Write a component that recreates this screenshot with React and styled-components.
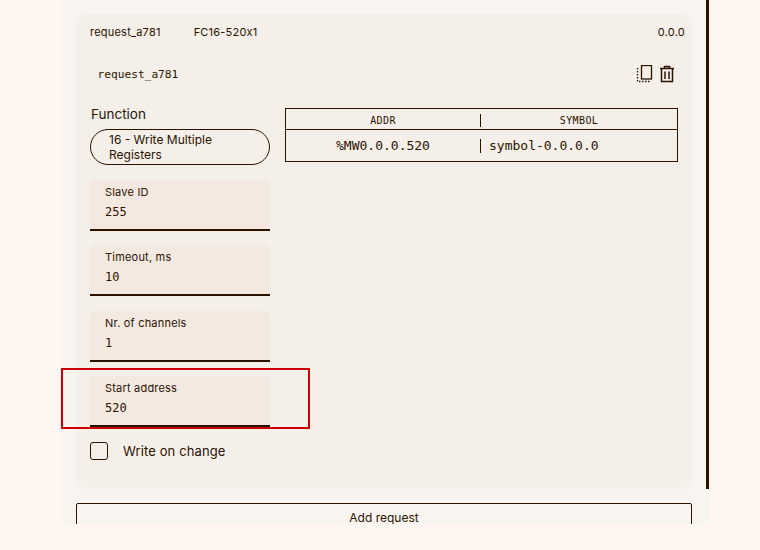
import React from 'react'
import styled, { createGlobalStyle } from 'styled-components'

const GlobalStyle = createGlobalStyle`
   html, body{
      margin: 0;
      height: 100%;
      background: #fff5f1;
   }
   body{
      font-family: Inter, "Liberation Sans", sans-serif;
      color: #2b1300;
   }
`

const MONO = '"DejaVu Sans Mono", "Liberation Mono", monospace'

const fields = [
   { label: 'Slave ID', value: '255' },
   { label: 'Timeout, ms', value: '10' },
   { label: 'Nr. of channels', value: '1' },
   { label: 'Start address', value: '520', highlighted: true },
]

const CopyIcon = () => (
   <svg width="18" height="18" viewBox="0 0 18 18" fill="none" stroke="#2b1300">
      <rect x="5.5" y="0.5" width="10" height="13.5" strokeWidth="1.3" />
      <path d="M1.5 3v13.5H15" strokeWidth="1.3" strokeDasharray="1.5 1.5" />
   </svg>
)

const TrashIcon = () => (
   <svg width="16" height="18" viewBox="0 0 16 18" fill="none" stroke="#2b1300">
      <path d="M1 3.5h14M5.5 3V1.5h5V3" strokeWidth="1.5" />
      <path d="M2.5 4v12.5h11V4" strokeWidth="1.5" />
      <path d="M6 6.5v7.5M10 6.5v7.5" strokeWidth="1.5" />
   </svg>
)

const App = () => {
   return (
      <>
         <GlobalStyle />
         <Viewport>
            <Panel>
               <ScrollArea>
                  <Card>
                     <CardHeader>
                        <HeaderLeft>
                           <span>request_a781</span>
                           <span>FC16-520x1</span>
                        </HeaderLeft>
                        <span>0.0.0</span>
                     </CardHeader>
                     <TitleRow>
                        <RequestName>request_a781</RequestName>
                        <Actions>
                           <CopyIcon />
                           <TrashIcon />
                        </Actions>
                     </TitleRow>
                     <Body>
                        <FormColumn>
                           <FunctionLabel>Function</FunctionLabel>
                           <FunctionSelect>16 - Write Multiple Registers</FunctionSelect>
                           {fields.map((f) => (
                              <Field key={f.label} $highlighted={f.highlighted}>
                                 <FieldLabel>{f.label}</FieldLabel>
                                 <FieldValue>{f.value}</FieldValue>
                              </Field>
                           ))}
                           <CheckRow>
                              <CheckBox />
                              <span>Write on change</span>
                           </CheckRow>
                        </FormColumn>
                        <ChannelTable>
                           <TableHead>
                              <HeadCell>ADDR</HeadCell>
                              <HeadCell $divided>SYMBOL</HeadCell>
                           </TableHead>
                           <TableRow>
                              <RowCell>%MW0.0.0.520</RowCell>
                              <RowCell $divided $left>symbol-0.0.0.0</RowCell>
                           </TableRow>
                        </ChannelTable>
                     </Body>
                  </Card>
               </ScrollArea>
               <AddRow>
                  <AddButton>Add request</AddButton>
               </AddRow>
            </Panel>
         </Viewport>
      </>
   )
}

const Viewport = styled.div`
   height: 524px;
   overflow: hidden;
`

const Panel = styled.div`
   width: 648px;
   margin-left: 61px;
   height: 100%;
   background: #f8f4ef;
`

const ScrollArea = styled.div`
   box-sizing: border-box;
   height: 489px;
   padding: 14px 14px 0 15px;
   width: 648px;
   border-right: 3px solid #2b1300;
`

const Card = styled.section`
   box-sizing: border-box;
   height: 475px;
   width: 616px;
   padding: 0 14px;
   background: #f4efe9;
   border-radius: 10px;
`

const CardHeader = styled.div`
   display: flex;
   justify-content: space-between;
   align-items: center;
   height: 35px;
   margin-right: -7px;
   font-size: 11px;
   letter-spacing: 0.22px;
`

const HeaderLeft = styled.div`
   display: flex;
   gap: 33px;
`

const TitleRow = styled.div`
   display: flex;
   justify-content: space-between;
   align-items: center;
   height: 24px;
   margin-top: 13px;
   padding: 0 3px 0 7.5px;
`

const RequestName = styled.span`
   font-family: ${MONO};
   font-size: 11.2px;
`

const Actions = styled.div`
   display: flex;
   align-items: center;
   gap: 5px;
`

const Body = styled.div`
   display: flex;
   align-items: flex-start;
   gap: 15px;
   margin-top: 19px;
`

const FormColumn = styled.div`
   width: 180px;
   flex: none;
   display: flex;
   flex-direction: column;
`

const FunctionLabel = styled.div`
   font-size: 13.5px;
   line-height: 16px;
   margin-top: 1px;
   padding-left: 1px;
`

const FunctionSelect = styled.div`
   box-sizing: border-box;
   margin-top: 7px;
   margin-bottom: 15px;
   height: 36px;
   padding: 2px 40px 0 18px;
   border: 1px solid #2b1300;
   border-radius: 18px;
   font-size: 12px;
   line-height: 15px;
`

const Field = styled.div`
   position: relative;
   box-sizing: border-box;
   height: 51px;
   margin-bottom: 14.4px;
   padding: 5px 15px 0;
   background: #f4e9e1;
   border-radius: 5px 5px 0 0;
   border-bottom: 2px solid #2b1300;

   ${(p) => p.$highlighted && `
      &::after{
         content: '';
         position: absolute;
         left: -29px;
         top: -8px;
         width: 245px;
         height: 57px;
         border: 2px solid #cc0000;
      }
   `}
`

const FieldLabel = styled.div`
   font-size: 11px;
   line-height: 14px;
   letter-spacing: 0.2px;
`

const FieldValue = styled.div`
   margin-top: 5px;
   font-family: ${MONO};
   font-size: 12px;
   line-height: 16px;
`

const CheckRow = styled.div`
   display: flex;
   align-items: center;
   gap: 15px;
   font-size: 13px;
   letter-spacing: 0.12px;
`

const CheckBox = styled.div`
   box-sizing: border-box;
   width: 18px;
   height: 18px;
   border: 1px solid #2b1300;
   border-radius: 3px;
`

const ChannelTable = styled.div`
   flex: 1;
   margin-top: 3px;
   border: 1px solid #2b1300;
   font-family: ${MONO};
`

const TableHead = styled.div`
   display: grid;
   grid-template-columns: 194px 1fr;
   height: 18px;
   padding-top: 2px;
   align-items: center;
   border-bottom: 1px solid #2b1300;
   font-size: 10px;
   letter-spacing: 0.4px;
`

const TableRow = styled.div`
   display: grid;
   grid-template-columns: 194px 1fr;
   height: 31px;
   align-items: center;
   font-size: 13px;
`

const HeadCell = styled.div`
   text-align: center;
   line-height: 13px;
   ${(p) => p.$divided && 'border-left: 1px solid #2b1300;'}
`

const RowCell = styled.div`
   text-align: ${(p) => (p.$left ? 'left' : 'center')};
   line-height: 14px;
   ${(p) => p.$divided && 'border-left: 1px solid #2b1300;'}
   ${(p) => p.$left && 'padding-left: 8px;'}
`

const AddRow = styled.div`
   padding: 14px 17px 0 15px;
`

const AddButton = styled.button`
   box-sizing: border-box;
   display: block;
   width: 616px;
   height: 30px;
   padding: 0;
   background: transparent;
   border: 1px solid #2b1300;
   border-radius: 2px;
   color: #2b1300;
   font-family: Inter, "Liberation Sans", sans-serif;
   font-size: 12px;
   line-height: 12px;
   text-align: center;
`

export default App
